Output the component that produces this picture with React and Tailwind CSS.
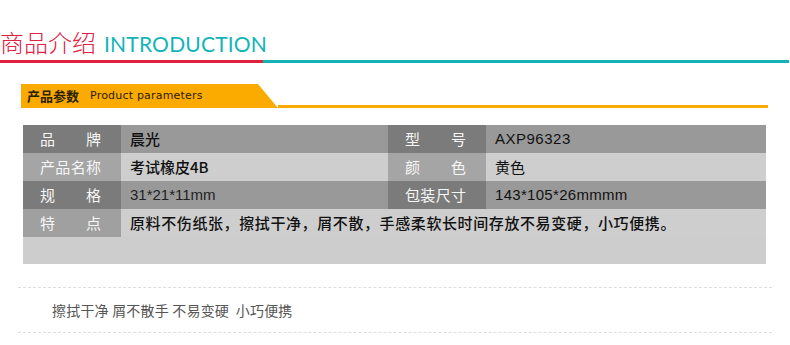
const cjk = "font-['Noto_Sans_CJK_SC',sans-serif]"

function Label({ text, dark }) {
    return (
        <div className={`flex items-center justify-between pl-[17px] pr-[20px] text-[15px] text-[#f6f6f6] ${dark ? "bg-[#7b7b7b]" : "bg-[#a5a5a5]"}`}>
            {text.split("").map((c, i) => <span key={i}>{c}</span>)}
        </div>
    )
}

function Value({ children, dark, className = "" }) {
    return (
        <div className={`flex items-center pl-[9px] text-[15px] text-[#111] ${dark ? "bg-[#999999]" : "bg-[#cecece]"} ${className}`}>
            {children}
        </div>
    )
}

export default function App() {
    return (
        <div className={`w-[790px] h-[345px] bg-white overflow-hidden ${cjk}`}>
            {/* section title */}
            <div className="pt-[26px] flex items-baseline">
                <span className="text-[24px] leading-[32px] text-[#e0213f] font-light">商品介绍</span>
                <span className="ml-[8px] text-[21px] leading-[32px] text-[#13b4b8] font-['Lato',sans-serif] tracking-[0.2px]">INTRODUCTION</span>
            </div>
            <div className="flex h-[3px] w-[789px]">
                <div className="w-[263px] bg-[#e0213f]" />
                <div className="flex-1 bg-[#13b4b8]" />
            </div>

            {/* product parameters bar */}
            <div className="ml-[21px] mt-[21px] w-[747px] flex items-end">
                <div className="w-[257px] h-[24px] bg-[#fbab00] flex items-center pl-[6px] [clip-path:polygon(0_0,237px_0,100%_100%,0_100%)]">
                    <span className="text-[13px] font-bold text-[#2b2000]">产品参数</span>
                    <span className="ml-[11px] text-[11px] text-[#2b2000] font-['DejaVu_Sans',sans-serif] tracking-[0.2px]">Product parameters</span>
                </div>
                <div className="flex-1 h-[3px] bg-[#fbab00]" />
            </div>

            {/* table */}
            <div className="ml-[23px] mt-[17px] w-[743px] grid grid-cols-[98px_267px_98px_280px] auto-rows-[28px]">
                <Label text="品牌" dark />
                <Value dark className="font-medium">晨光</Value>
                <Label text="型号" dark />
                <Value dark className="font-['Liberation_Sans',sans-serif] text-[14px] tracking-[0.5px]">AXP96323</Value>

                <Label text="产品名称" />
                <Value className="font-medium">考试橡皮4B</Value>
                <Label text="颜色" />
                <Value>黄色</Value>

                <Label text="规格" dark />
                <Value dark className="font-['Liberation_Sans',sans-serif] text-[#222]">31*21*11mm</Value>
                <Label text="包装尺寸" dark />
                <Value dark className="font-['Liberation_Sans',sans-serif] text-[14px] tracking-[0.3px]">143*105*26mmmm</Value>

                <div className="flex items-center justify-between pl-[17px] pr-[20px] text-[15px] text-[#f6f6f6] bg-[#a0a0a0]">
                    <span>特</span><span>点</span>
                </div>
                <Value className="col-span-3 font-medium bg-[#cccccc] tracking-[0.6px]">原料不伤纸张，擦拭干净，屑不散，手感柔软长时间存放不易变硬，小巧便携。</Value>
            </div>
            <div className="ml-[23px] w-[743px] h-[27px] bg-[#cdcdcd]" />

            {/* summary */}
            <div className="ml-[18px] mt-[23px] w-[754px] border-t border-b border-dashed border-[#dedede] h-[46px] pt-[12px] pl-[34px]">
                <p className="text-[14px] leading-[20px] text-[#555] whitespace-pre tracking-[0.2px]">擦拭干净 屑不散手 不易变硬  小巧便携</p>
            </div>
        </div>
    )
}
